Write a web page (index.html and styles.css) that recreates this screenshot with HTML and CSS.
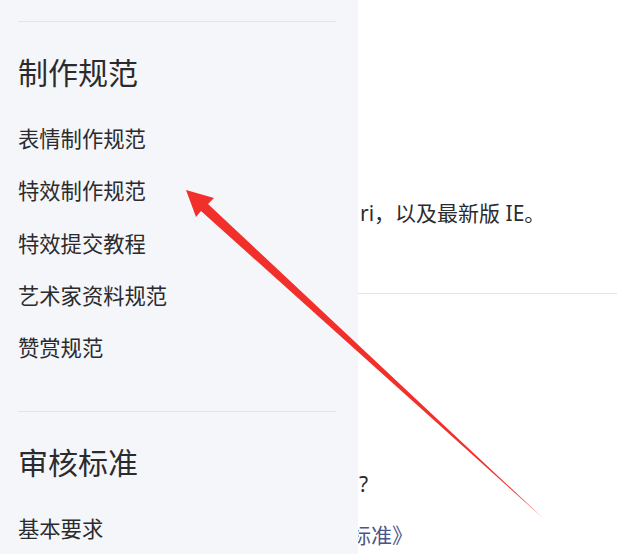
FILE: index.html
```html
<!DOCTYPE html>
<html lang="zh-CN">
<head>
  <meta charset="UTF-8" />
  <meta name="viewport" content="width=device-width, initial-scale=1" />
  <title>帮助文档</title>
  <link rel="stylesheet" href="styles.css">
</head>
<body>
  <div class="page">
    <aside class="sidebar">
      <section class="group">
        <h2 class="group-title">制作规范</h2>
        <ul class="group-list">
          <li>表情制作规范</li>
          <li>特效制作规范</li>
          <li>特效提交教程</li>
          <li>艺术家资料规范</li>
          <li>赞赏规范</li>
        </ul>
      </section>
      <section class="group">
        <h2 class="group-title">审核标准</h2>
        <ul class="group-list">
          <li>基本要求</li>
        </ul>
      </section>
    </aside>

    <main class="content">
      <p class="browser-note">ri，以及最新版 IE。</p>
      <hr class="divider" />
      <p class="question">?</p>
      <p class="doc-link"><span>《审核标准》</span></p>
    </main>
  </div>

  <svg class="arrow" width="639" height="554" viewBox="0 0 639 554">
    <polygon fill="#f2302b" points="186,190 214,198 208,204 544,519 201,211 196,217" />
  </svg>
</body>
</html>
```

FILE: styles.css
```css
body {
  margin: 0;
  font-family: "Noto Sans", "Noto Sans CJK SC", sans-serif;
  color: #2b2b2e;
  background: #ffffff;
  overflow: hidden;
}

.page {
  display: flex;
  height: 554px;
}

.sidebar {
  width: 358px;
  flex-shrink: 0;
  background: #f5f6fa;
  padding-top: 21px;
  box-sizing: border-box;
}

.group {
  margin: 0 22px 0 18px;
  border-top: 1px solid #e3e5ea;
}

.group-title {
  margin: 31px 0 20px;
  font-size: 30px;
  font-weight: 400;
  line-height: 40px;
}

.group-list {
  list-style: none;
  margin: 0 0 37px;
  padding: 0;
}

.group-list li {
  font-size: 21.3px;
  line-height: 52.3px;
}

.content {
  flex: 1;
  overflow: hidden;
  padding-right: 22px;
}

.browser-note {
  margin: 198px 0 0 2px;
  font-size: 21px;
  line-height: 30px;
  white-space: nowrap;
}

.divider {
  margin: 65px 0 0;
  border: none;
  border-top: 1px solid #e3e5ea;
}

.question {
  margin: 175px 0 0 1px;
  font-size: 21px;
  line-height: 30px;
}

.doc-link {
  margin: 21px 0 0;
  font-size: 21px;
  line-height: 30px;
  color: #4a5488;
  white-space: nowrap;
}

.doc-link span {
  margin-left: -71px;
}

.arrow {
  position: absolute;
  left: 0;
  top: 0;
  pointer-events: none;
}
```
